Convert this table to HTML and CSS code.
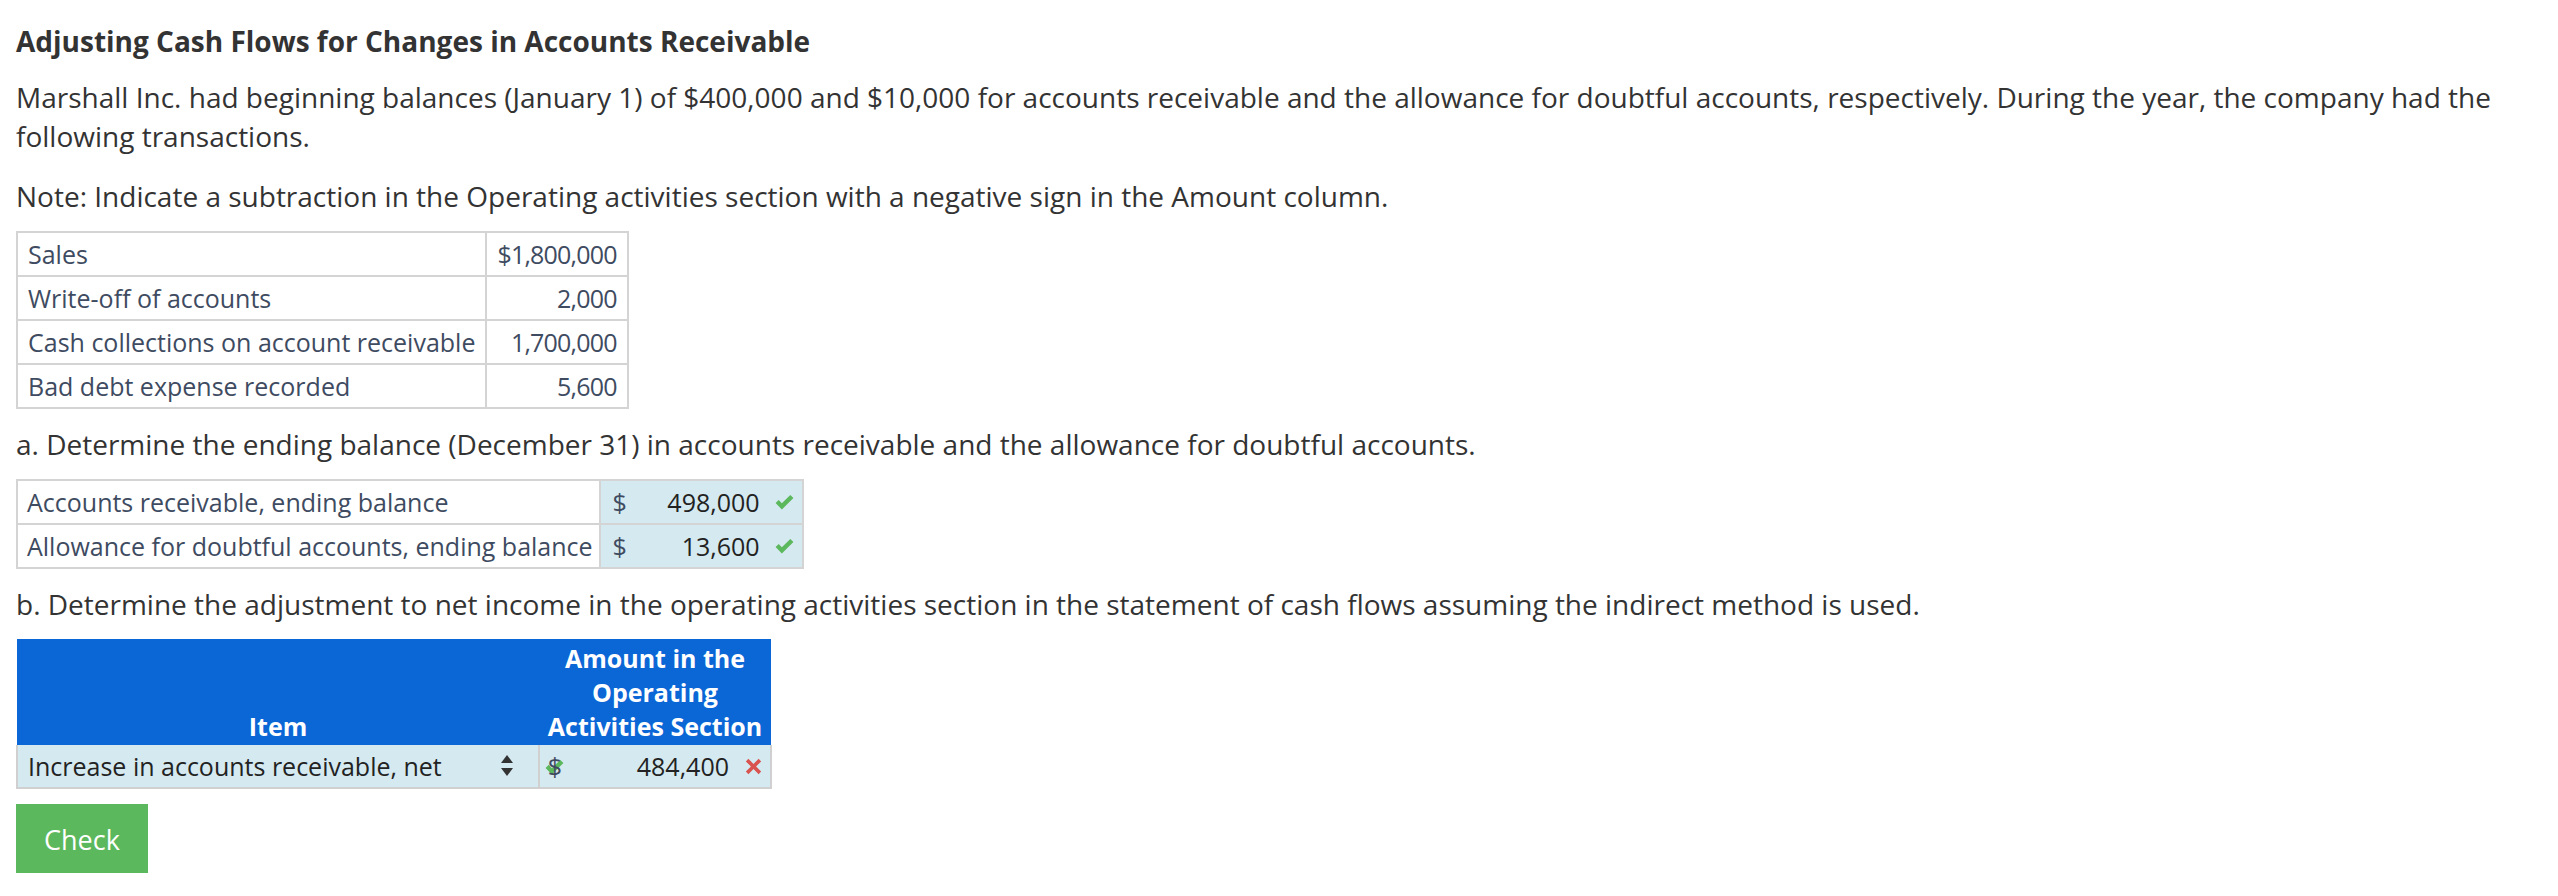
FILE: index.html
```html
<!DOCTYPE html>
<html lang="en">
<head>
<meta charset="utf-8">
<title>Adjusting Cash Flows for Changes in Accounts Receivable</title>
<link rel="stylesheet" href="styles.css">
</head>
<body>
<div class="page">
  <h1 class="title">Adjusting Cash Flows for Changes in Accounts Receivable</h1>
  <p class="text">Marshall Inc. had beginning balances (January 1) of $400,000 and $10,000 for accounts receivable and the allowance for doubtful accounts, respectively. During the year, the company had the following transactions.</p>
  <p class="text note">Note: Indicate a subtraction in the Operating activities section with a negative sign in the Amount column.</p>

  <table class="grid">
    <tr><td class="lbl">Sales</td><td class="val">$1,800,000</td></tr>
    <tr><td class="lbl">Write-off of accounts</td><td class="val">2,000</td></tr>
    <tr><td class="lbl">Cash collections on account receivable</td><td class="val">1,700,000</td></tr>
    <tr><td class="lbl">Bad debt expense recorded</td><td class="val">5,600</td></tr>
  </table>

  <p class="text">a. Determine the ending balance (December 31) in accounts receivable and the allowance for doubtful accounts.</p>

  <table class="grid answers">
    <tr>
      <td class="lbl">Accounts receivable, ending balance</td>
      <td class="amt">
        <div class="amt-box">
          <span class="cur">$</span><span class="num">498,000</span>
          <svg class="ok" viewBox="0 0 20 16" width="21" height="17"><path d="M1.5 8.5 L4.5 5.5 L7.5 8.6 L15.5 0.8 L18.5 3.8 L7.5 14.6 Z" fill="#5cb85c"/></svg>
        </div>
      </td>
    </tr>
    <tr>
      <td class="lbl">Allowance for doubtful accounts, ending balance</td>
      <td class="amt">
        <div class="amt-box">
          <span class="cur">$</span><span class="num">13,600</span>
          <svg class="ok" viewBox="0 0 20 16" width="21" height="17"><path d="M1.5 8.5 L4.5 5.5 L7.5 8.6 L15.5 0.8 L18.5 3.8 L7.5 14.6 Z" fill="#5cb85c"/></svg>
        </div>
      </td>
    </tr>
  </table>

  <p class="text">b. Determine the adjustment to net income in the operating activities section in the statement of cash flows assuming the indirect method is used.</p>

  <table class="ops">
    <tr class="ops-head">
      <th class="h-item">Item</th>
      <th class="h-amt">Amount in the<br>Operating<br>Activities Section</th>
    </tr>
    <tr class="ops-row">
      <td class="o-item">
        <div class="sel">
          <span>Increase in accounts receivable, net</span>
          <svg class="sort" viewBox="0 0 14 24" width="14" height="24"><path d="M7 1 L13 9 L1 9 Z M1 14 L13 14 L7 22 Z" fill="#333"/></svg>
        </div>
      </td>
      <td class="o-amt">
        <div class="o-box">
          <span class="cur-wrap">
            <svg class="cur-ok" viewBox="0 0 20 16" width="21" height="17"><path d="M1.5 8.5 L4.5 5.5 L7.5 8.6 L15.5 0.8 L18.5 3.8 L7.5 14.6 Z" fill="#5cb85c"/></svg>
            <span class="cur">$</span>
          </span>
          <span class="num">484,400</span>
          <svg class="bad" viewBox="0 0 16 16" width="17" height="17"><path d="M3.2 0.8 L8 5.6 L12.8 0.8 L15.2 3.2 L10.4 8 L15.2 12.8 L12.8 15.2 L8 10.4 L3.2 15.2 L0.8 12.8 L5.6 8 L0.8 3.2 Z" fill="#d9534f"/></svg>
        </div>
      </td>
    </tr>
  </table>

  <button class="check" type="button">Check</button>
</div>
</body>
</html>
```

FILE: styles.css
```css
* { box-sizing: border-box; }

body {
  margin: 0;
  background: #ffffff;
  font-family: "Open Sans", "Noto Sans", sans-serif;
  color: #333333;
}

.page {
  padding: 20px 16px 0 16px;
}

.title {
  margin: 0 0 16px 0;
  font-size: 28px;
  line-height: 42px;
  font-weight: 700;
  color: #333333;
}

.text {
  margin: 0 0 15px 0;
  font-size: 28px;
  line-height: 39px;
  color: #333333;
}

.note {
  margin-top: 21px;
}

.grid {
  border-collapse: collapse;
  margin: 0 0 16px 0;
  font-size: 25px;
  line-height: 32px;
  color: #3e4b61;
}

.grid td {
  border: 2px solid #d4d4d4;
  padding: 5px 10px;
  white-space: nowrap;
}

.grid .val {
  text-align: right;
  letter-spacing: -0.8px;
}

.answers .lbl {
  padding: 5px 6px 5px 9px;
}

.grid .amt {
  background: #d5e9f0;
  padding: 5px 7px 5px 12px;
}

.amt-box {
  display: flex;
  align-items: center;
  width: 182px;
}

.cur {
  color: #3e4b61;
}

.num {
  flex: 1;
  text-align: right;
  color: #222222;
}

.ok {
  margin-left: 14px;
  flex: none;
}

.ops {
  border-collapse: collapse;
  margin: 0 0 15px 0;
  font-size: 25px;
}

.ops-head th {
  background: #0b66d6;
  color: #ffffff;
  font-weight: 700;
  line-height: 34px;
  padding: 2px 6px;
  text-align: center;
  vertical-align: bottom;
}

.h-item {
  width: 522px;
}

.h-amt {
  width: 232px;
}

.ops-row td {
  background: #d5e9f0;
  border: 2px solid #d0d0d0;
  border-top: none;
  line-height: 32px;
  padding: 5px 0;
  white-space: nowrap;
}

.sel {
  display: flex;
  align-items: center;
  justify-content: space-between;
  padding: 0 24px 0 10px;
  color: #222222;
}

.sort {
  flex: none;
}

.o-box {
  display: flex;
  align-items: center;
  padding: 0 8px 0 4px;
}

.cur-wrap {
  position: relative;
  width: 22px;
  display: inline-flex;
  justify-content: center;
}

.cur-ok {
  position: absolute;
  left: 0;
  top: 9px;
}

.cur-wrap .cur {
  position: relative;
}

.o-box .num {
  flex: 1;
}

.bad {
  margin-left: 16px;
  flex: none;
}

.check {
  display: block;
  background: #5cb85c;
  color: #ffffff;
  border: none;
  font-family: "Open Sans", "Noto Sans", sans-serif;
  font-size: 27px;
  line-height: 39px;
  padding: 16px 28px 14px 28px;
  margin: 0;
  cursor: pointer;
}
```
